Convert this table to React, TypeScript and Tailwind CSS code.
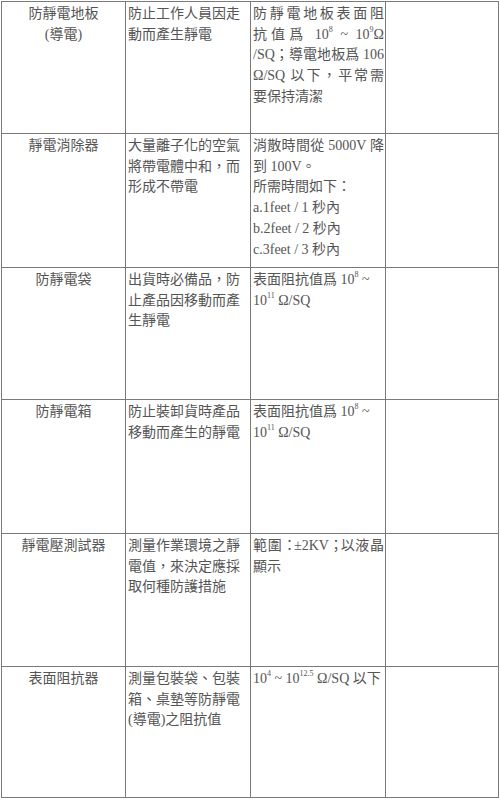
import React from "react";

const Sup = ({ children }: { children: React.ReactNode }) => (
  <sup className="relative -top-[7px] align-baseline text-[8px] leading-none">{children}</sup>
);

const J = ({ children }: { children: React.ReactNode }) => (
  <div className="whitespace-nowrap text-justify [text-align-last:justify]">{children}</div>
);

const L = ({ children }: { children: React.ReactNode }) => <div className="whitespace-nowrap">{children}</div>;

const rows: {
  a: React.ReactNode;
  b: string[];
  c: React.ReactNode;
}[] = [
  {
    a: (
      <>
        <div>防靜電地板</div>
        <div>(導電)</div>
      </>
    ),
    b: ["防止工作人員因走", "動而產生靜電"],
    c: (
      <>
        <J>防靜電地板表面阻</J>
        <J>
          抗值爲 10<Sup>8</Sup> ~ 10<Sup>9</Sup>Ω
        </J>
        <J>/SQ；導電地板爲 106</J>
        <J>Ω/SQ 以下，平常需</J>
        <L>要保持清潔</L>
      </>
    ),
  },
  {
    a: <div>靜電消除器</div>,
    b: ["大量離子化的空氣", "將帶電體中和，而", "形成不帶電"],
    c: (
      <>
        <J>消散時間從 5000V 降</J>
        <L>到 100V。</L>
        <L>所需時間如下：</L>
        <L>a.1feet / 1 秒內</L>
        <L>b.2feet / 2 秒內</L>
        <L>c.3feet / 3 秒內</L>
      </>
    ),
  },
  {
    a: <div>防靜電袋</div>,
    b: ["出貨時必備品，防", "止產品因移動而產", "生靜電"],
    c: (
      <>
        <L>
          表面阻抗值爲 10<Sup>8</Sup> ~
        </L>
        <L>
          10<Sup>11</Sup> Ω/SQ
        </L>
      </>
    ),
  },
  {
    a: <div>防靜電箱</div>,
    b: ["防止裝卸貨時產品", "移動而產生的靜電"],
    c: (
      <>
        <L>
          表面阻抗值爲 10<Sup>8</Sup> ~
        </L>
        <L>
          10<Sup>11</Sup> Ω/SQ
        </L>
      </>
    ),
  },
  {
    a: <div>靜電壓測試器</div>,
    b: ["測量作業環境之靜", "電值，來決定應採", "取何種防護措施"],
    c: (
      <>
        <J>
          範圍<span className="tracking-[-3px]">：</span>±2KV<span className="tracking-[-3px]">；</span>以液晶
        </J>
        <L>顯示</L>
      </>
    ),
  },
  {
    a: <div>表面阻抗器</div>,
    b: ["測量包裝袋、包裝", "箱、桌墊等防靜電", "(導電)之阻抗值"],
    c: (
      <L>
        10<Sup>4</Sup> ~ 10<Sup>12.5</Sup> Ω/SQ 以下
      </L>
    ),
  },
];

const heights = ["h-[132px]", "h-[134px]", "h-[132px]", "h-[134px]", "h-[133px]", "h-[131px]"];

export default function App() {
  return (
    <div className="w-[500px] h-[800px] bg-white overflow-hidden">
      <div
        className="ml-[1px] mt-[1px] w-[498px] grid grid-cols-[124px_125px_135px_113px] border-l border-t border-[#7a7a7a] text-[14px] leading-[20.7px] text-[#555555]"
        style={{ fontFamily: '"Liberation Serif", "Noto Sans CJK TC", serif' }}
      >
        {rows.map((r, i) => (
          <React.Fragment key={i}>
            <div className={`${heights[i]} border-r border-b border-[#7a7a7a] pt-[2px] px-[2px] text-center`}>{r.a}</div>
            <div className={`${heights[i]} border-r border-b border-[#7a7a7a] pt-[2px] pl-[2px] pr-[1px]`}>
              {r.b.map((t, k) => (
                <div key={k} className="whitespace-nowrap">
                  {t}
                </div>
              ))}
            </div>
            <div className={`${heights[i]} border-r border-b border-[#7a7a7a] pt-[2px] pl-[2px] pr-[1px]`}>{r.c}</div>
            <div className={`${heights[i]} border-r border-b border-[#7a7a7a]`}></div>
          </React.Fragment>
        ))}
      </div>
    </div>
  );
}
